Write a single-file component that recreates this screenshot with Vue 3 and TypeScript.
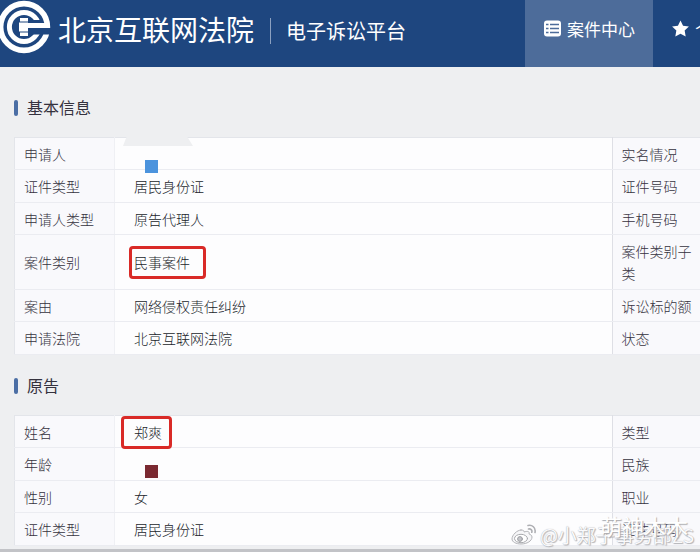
<script setup lang="ts">
interface Row {
  label: string
  value: string
  label2: string
  mark?: 'case' | 'name'
  chip?: 'blue' | 'brown'
  smudge?: boolean
}

interface Section {
  title: string
  rows: Row[]
}

const sections: Section[] = [
  {
    title: '基本信息',
    rows: [
      { label: '申请人', value: '', label2: '实名情况', chip: 'blue', smudge: true },
      { label: '证件类型', value: '居民身份证', label2: '证件号码' },
      { label: '申请人类型', value: '原告代理人', label2: '手机号码' },
      { label: '案件类别', value: '民事案件', label2: '案件类别子类', mark: 'case' },
      { label: '案由', value: '网络侵权责任纠纷', label2: '诉讼标的额' },
      { label: '申请法院', value: '北京互联网法院', label2: '状态' },
    ],
  },
  {
    title: '原告',
    rows: [
      { label: '姓名', value: '郑爽', label2: '类型', mark: 'name' },
      { label: '年龄', value: '', label2: '民族', chip: 'brown' },
      { label: '性别', value: '女', label2: '职业' },
      { label: '证件类型', value: '居民身份证', label2: '证件号码' },
    ],
  },
]
</script>

<template>
  <div class="page">
    <header class="header">
      <svg class="logo" viewBox="0 0 52 54" aria-hidden="true">
        <g fill="none" stroke="#fff">
          <circle cx="24" cy="27" r="23.4" stroke-width="5.6" />
          <circle cx="24" cy="27" r="14.600" stroke-width="5" />
        </g>
        <path d="M31 20h11v3H31zM31 28h21v6.500H31z" fill="#1e467f" />
        <path d="M26 23h23.500l.6 5H26z" fill="#fff" />
        <path d="M20 18h8v3.500h-8zM19 22.500h9v9h-9zM20 32.500h8V36h-8z" fill="#fff" />
      </svg>
      <h1 class="court">北京互联网法院</h1>
      <span class="platform">电子诉讼平台</span>
      <nav class="nav">
        <a class="nav-item active" href="#cases">
          <svg class="icon" viewBox="0 0 17 17" aria-hidden="true">
            <rect y="0.500" width="17" height="16" rx="3" fill="#fff" />
            <path d="M2 4.500h2.500M6 4.500h9M2 8.500h2.500M6 8.500h9M2 12.500h2.500M6 12.500h9" stroke="#4d6c9a" stroke-width="1.600" />
          </svg>
          <span>案件中心</span>
        </a>
        <a class="nav-item" href="#personal">
          <svg class="icon" viewBox="0 0 18 17" aria-hidden="true">
            <path d="M9 0l2.700 5.600 6.200.8-4.500 4.300 1.100 6.200L9 14l-5.500 2.900 1.100-6.200L.1 6.400l6.200-.8z" fill="#fff" />
          </svg>
          <span>个人中心</span>
        </a>
      </nav>
    </header>

    <main class="content">
      <section v-for="section in sections" :key="section.title" class="section">
        <h2 class="title">{{ section.title }}</h2>
        <table class="info">
          <colgroup>
            <col class="col-label" />
            <col />
            <col class="col-side" />
          </colgroup>
          <tbody>
            <tr v-for="row in section.rows" :key="row.label">
              <th scope="row">{{ row.label }}</th>
              <td>
                <span v-if="row.smudge" class="smudge"></span>
                <span v-if="row.chip" class="chip" :class="row.chip"></span>
                <span class="value" :class="row.mark">{{ row.value }}</span>
              </td>
              <th scope="row" class="side">{{ row.label2 }}</th>
            </tr>
          </tbody>
        </table>
      </section>
    </main>

    <div class="edge"></div>

    <div class="watermark">
      <svg class="weibo" viewBox="0 0 26 22" aria-hidden="true">
        <g fill="none" stroke-linecap="round">
          <path d="M10 6C6 6 1 11 1 15c0 3 4 5 9 5 6 0 11-3 11-7 0-2-2-2.500-3-3 1-3-2-3-5-2 0-1 0-2-3-2z" fill="#f6f6f8" stroke="#b4b5b9" />
          <ellipse cx="10" cy="14.500" rx="6.500" ry="4.200" fill="#fff" stroke="#a9aaae" />
          <circle cx="9" cy="15" r="2.400" fill="#c4c5c9" stroke="#9d9ea3" />
          <path d="M17 1.500c4-1 8 2 7 7M17.500 5c2-.5 4 1 3.300 3.300" stroke="#aeafb3" stroke-width="1.600" />
        </g>
      </svg>
      <span>@小郑子事务部ZS</span>
    </div>
    <div class="stamp">萌神木木</div>
  </div>
</template>

<style>
body {
  margin: 0;
  background: #eeeff1;
}
</style>

<style scoped>
.page {
  position: relative;
  overflow: hidden;
  background: #eeeff1;
  font-family: "Noto Sans CJK SC", sans-serif;
  font-weight: 300;
  color: #35323e;
}

.header {
  display: flex;
  align-items: center;
  height: 67px;
  overflow: hidden;
  background: #1e467f;
  color: #fff;
  white-space: nowrap;
}

.logo {
  flex: none;
  width: 52px;
  height: 54px;
  margin: 0 6px 13px 0;
}

.court {
  margin: 0 16px 10px 0;
  font-size: 28px;
  line-height: 40px;
  font-weight: 400;
}

.platform {
  margin-bottom: 6px;
  padding-left: 15px;
  border-left: 1px solid #8ba0c0;
  font-size: 20px;
  line-height: 26px;
  font-weight: 400;
}

.nav {
  display: flex;
  flex: none;
  align-self: stretch;
  width: 175px;
  margin-left: auto;
}

.nav-item {
  display: flex;
  flex: none;
  align-items: center;
  gap: 6px;
  box-sizing: border-box;
  padding: 0 19px 10px;
  color: #fff;
  font-size: 17px;
  font-weight: 400;
  text-decoration: none;
}

.nav-item.active {
  width: 128px;
  background: #4d6c9a;
}

.icon {
  flex: none;
  width: 17px;
  height: 17px;
}

.content {
  padding: 24px 0 3px 14px;
}

.section + .section {
  margin-top: 14px;
}

.title {
  display: flex;
  align-items: center;
  gap: 9px;
  margin: 0 0 13px;
  font-size: 16px;
  line-height: 33px;
  font-weight: 400;
}

.title::before {
  content: "";
  width: 4px;
  height: 16px;
  border-radius: 2px;
  background: #4b6ea5;
}

.info {
  width: 100%;
  table-layout: fixed;
  border-collapse: collapse;
  border: 1px solid #e3e5ea;
  border-right: 0;
  background: #fdfdfe;
  font-size: 14px;
  line-height: 22px;
}

.col-label {
  width: 100px;
}

.col-side {
  width: 88px;
}

.info th,
.info td {
  box-sizing: border-box;
  position: relative;
  padding: 5px 0;
  border-bottom: 1px solid #ebecf1;
  text-align: left;
  font-weight: 300;
}

.info tr:nth-child(odd) > * {
  padding-bottom: 4px;
}

.info th {
  padding-left: 9px;
  background: #f9f9fc;
  border-right: 1px solid #eff0f4;
}

.info td {
  padding-left: 19px;
  color: #211e2b;
}

.info .side {
  padding-left: 9px;
  padding-right: 6px;
  border-left: 1px solid #dedfe5;
  border-right: 0;
}

.value.case,
.value.name {
  position: relative;
}

.value.case::after,
.value.name::after {
  content: "";
  position: absolute;
  border: 3px solid #d92a27;
  border-radius: 4px;
}

.value.case::after {
  inset: -6px -16px -7px -5px;
}

.value.name::after {
  inset: -6px -10px -7px -13px;
}

.chip {
  position: absolute;
  left: 30px;
  top: 22px;
  z-index: 1;
  width: 13px;
  height: 13px;
}

.chip.blue {
  background: #4b93dd;
}

.chip.brown {
  top: 17px;
  background: #7a2931;
}

.smudge {
  position: absolute;
  left: 8px;
  top: -1px;
  width: 70px;
  height: 9px;
  background: #eeeff1;
  clip-path: polygon(5% 0, 92% 0, 100% 100%, 0 100%);
}

.edge {
  height: 3px;
  background: #c2c3c7;
}

.watermark {
  position: absolute;
  right: 6px;
  bottom: 5px;
  display: flex;
  align-items: center;
  gap: 3px;
  color: #fafafc;
  font-size: 19px;
  line-height: 24px;
  font-weight: 400;
  white-space: nowrap;
  text-shadow: 0 0 1px #a0a1a6, 1px 1px 1px #b4b5b9;
}

.weibo {
  width: 26px;
  height: 22px;
}

.stamp {
  position: absolute;
  right: 12px;
  bottom: 14px;
  color: #fff;
  font-size: 22px;
  line-height: 26px;
  font-weight: 400;
  white-space: nowrap;
  text-shadow: 1px 1px 1px #a8a9ae;
}
</style>
